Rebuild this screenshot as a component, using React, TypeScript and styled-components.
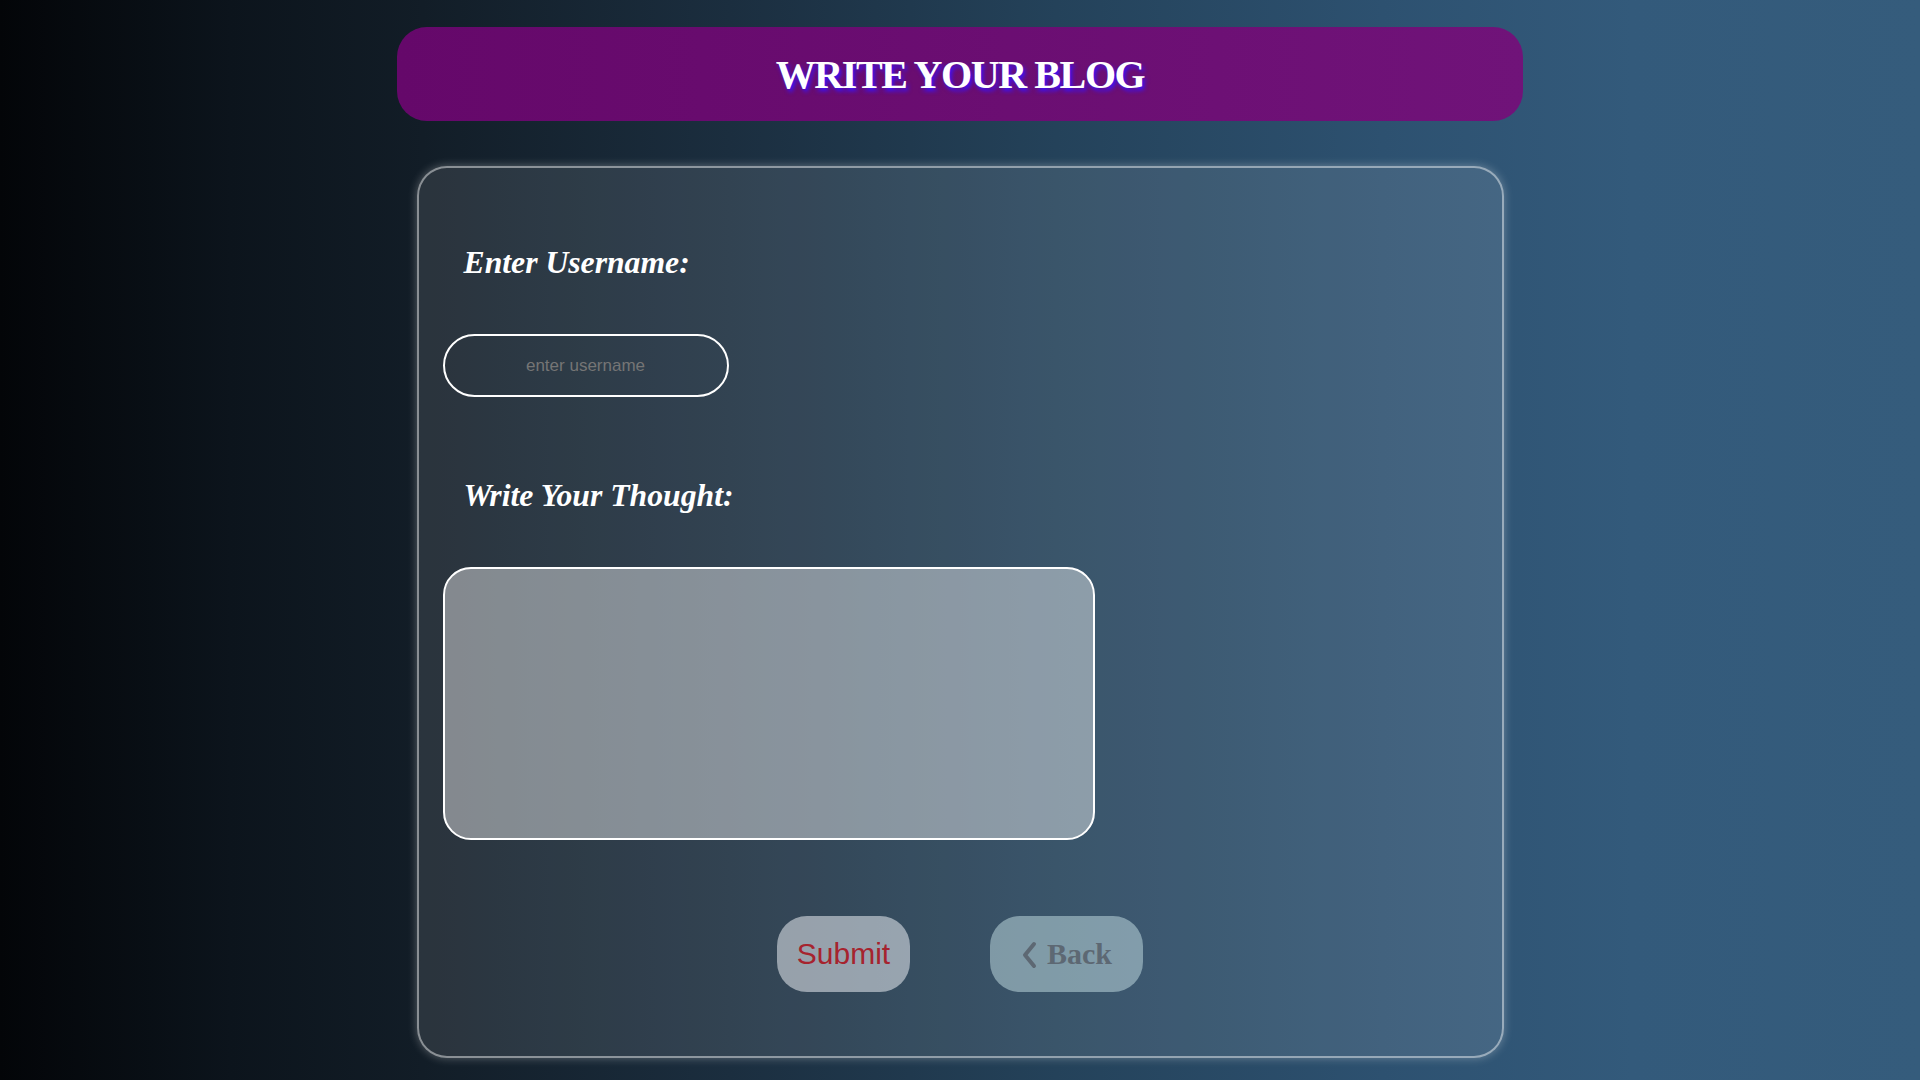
import React from "react";
import styled, { createGlobalStyle } from "styled-components";

const GlobalStyle = createGlobalStyle`
  * {
    box-sizing: border-box;
  }
  html,
  body {
    margin: 0;
    padding: 0;
    min-height: 100%;
  }
  body {
    font-family: "Liberation Sans", Arial, sans-serif;
  }
`;

const App = () => {
  return (
    <Page>
      <GlobalStyle />
      <TitleBar>
        <Title>WRITE YOUR BLOG</Title>
      </TitleBar>
      <Card>
        <Label htmlFor="username">Enter Username:</Label>
        <UsernameInput id="username" type="text" placeholder="enter username" />
        <Label htmlFor="thought" $gap={82}>
          Write Your Thought:
        </Label>
        <ThoughtArea id="thought" />
        <ButtonRow>
          <SubmitButton type="button">Submit</SubmitButton>
          <BackButton type="button">
            <svg width="16" height="28" viewBox="0 0 16 28" aria-hidden="true">
              <path
                d="M13 3 L4 14 L13 25"
                fill="none"
                stroke="currentColor"
                strokeWidth="4"
                strokeLinecap="round"
                strokeLinejoin="round"
              />
            </svg>
            Back
          </BackButton>
        </ButtonRow>
      </Card>
    </Page>
  );
};

export default App;

const Page = styled.div`
  min-height: 100vh;
  display: flex;
  flex-direction: column;
  align-items: center;
  padding: 27px 0 22px;
  background: linear-gradient(
    to right,
    #030508 0%,
    #0c141c 12%,
    #121d27 22%,
    #1b2e3f 38%,
    #24425a 55%,
    #2d5170 72%,
    #335a7b 85%,
    #355c7c 100%
  );
`;

const TitleBar = styled.header`
  width: 1126px;
  height: 94px;
  border-radius: 30px;
  display: flex;
  align-items: center;
  justify-content: center;
  background: linear-gradient(to right, #65086a, #701379);
`;

const Title = styled.h1`
  margin: 0;
  font-family: "Liberation Serif", "Times New Roman", serif;
  font-size: 40px;
  font-weight: 700;
  letter-spacing: -1.4px;
  color: #ffffff;
  text-shadow: 2px 3px 4px #3a12ff;
`;

const Card = styled.main`
  width: 1087px;
  margin-top: 45px;
  padding: 78px 24px 64px;
  display: flex;
  flex-direction: column;
  align-items: flex-start;
  border: 2px solid rgba(255, 255, 255, 0.45);
  border-radius: 30px;
  background: rgba(255, 255, 255, 0.1);
  box-shadow: 0 0 10px rgba(255, 255, 255, 0.3);
`;

const Label = styled.label<{ $gap?: number }>`
  display: block;
  margin: ${(p) => p.$gap ?? 0}px 0 0 21px;
  font-family: "Liberation Serif", "Times New Roman", serif;
  font-size: 31.7px;
  line-height: 34px;
  font-weight: 700;
  font-style: italic;
  color: #ffffff;
`;

const UsernameInput = styled.input`
  width: 286px;
  height: 63px;
  margin-top: 54px;
  padding: 0 16px;
  border: 2px solid #ffffff;
  border-radius: 32px;
  background: transparent;
  color: #ffffff;
  font-family: "Liberation Sans", Arial, sans-serif;
  font-size: 17px;
  text-align: center;
  outline: none;

  &::placeholder {
    color: #757575;
  }
`;

const ThoughtArea = styled.textarea`
  width: 652px;
  height: 273px;
  margin-top: 54px;
  padding: 16px 20px;
  border: 2px solid #ffffff;
  border-radius: 28px;
  background: rgba(255, 255, 255, 0.42);
  font-family: "Liberation Sans", Arial, sans-serif;
  font-size: 18px;
  resize: none;
  outline: none;
`;

const ButtonRow = styled.div`
  align-self: stretch;
  margin-top: 76px;
  display: flex;
  justify-content: center;
  gap: 80px;
`;

const PillButton = styled.button`
  height: 76px;
  border: none;
  border-radius: 30px;
  display: flex;
  align-items: center;
  justify-content: center;
  cursor: pointer;
`;

const SubmitButton = styled(PillButton)`
  width: 133px;
  background: rgba(250, 252, 255, 0.5);
  color: #a6232e;
  font-family: "Liberation Sans", Arial, sans-serif;
  font-size: 30px;
`;

const BackButton = styled(PillButton)`
  width: 153px;
  gap: 10px;
  background: rgba(216, 242, 244, 0.45);
  color: #5d6873;
  font-family: "Liberation Serif", "Times New Roman", serif;
  font-size: 30px;
  font-weight: 700;

  svg {
    flex-shrink: 0;
    margin-top: 1px;
  }
`;
